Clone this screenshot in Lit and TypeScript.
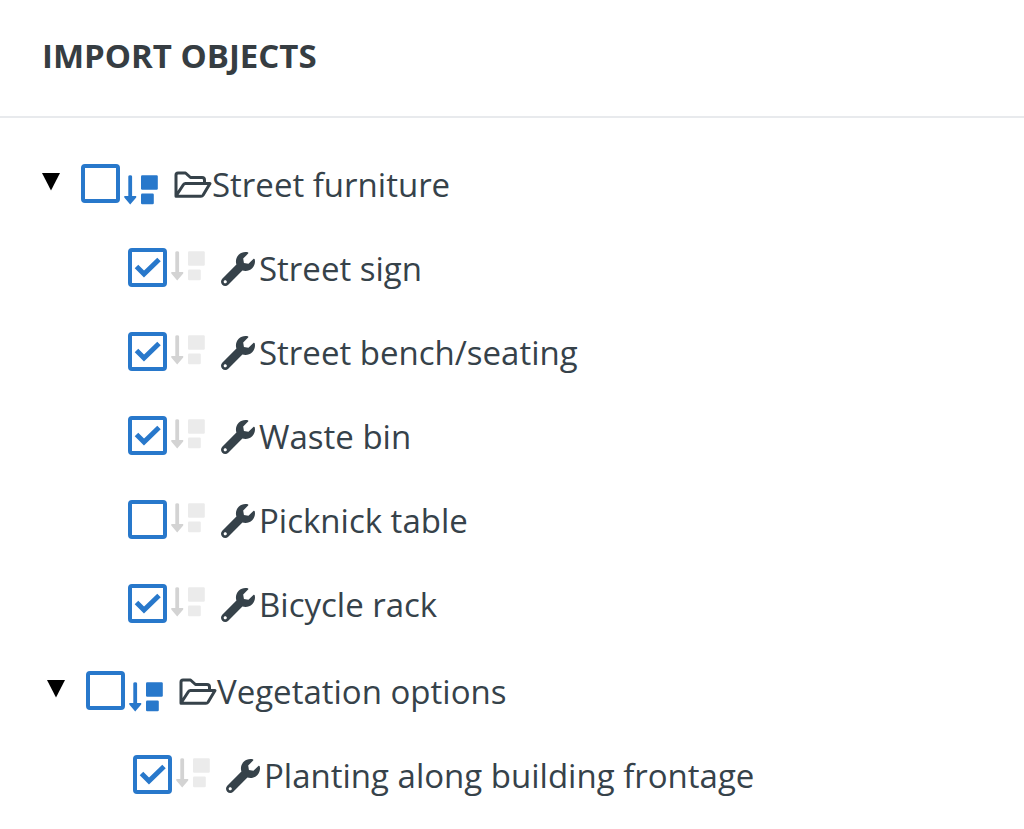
import { LitElement, html, css, svg } from "lit";
import { customElement, property, state } from "lit/decorators.js";
import { classMap } from "lit/directives/class-map.js";

interface Item {
  id: string;
  label: string;
  checked: boolean;
}

interface Group extends Item {
  open: boolean;
  items: Item[];
}

const folderIcon = html`<svg class="folder" viewBox="0 0 38 28" aria-hidden="true">
  <path d="M2 25V4Q2 2 4 2H11.500L16.500 6.500H28Q30.500 6.500 30.500 9V12.500M2 25L9.500 13.500Q10.200 12.500 11.500 12.500H36L29 24.200Q28.300 25.300 27 25.300H2Z" />
</svg>`;

const wrenchIcon = html`<svg class="wrench" viewBox="0 0 512 512" aria-hidden="true">
  <path d="M507.730 109.100c-2.240-9.030-13.540-12.090-20.120-5.510l-74.360 74.360-67.880-11.310-11.310-67.880 74.360-74.360c6.620-6.620 3.430-17.900-5.660-20.160-47.380-11.740-99.550.910-136.580 37.930-39.640 39.640-50.550 97.100-34.050 147.200L18.740 402.760c-24.990 24.990-24.990 65.510 0 90.500 24.990 24.990 65.510 24.990 90.500 0l213.210-213.210c50.120 16.710 107.470 5.680 147.370-34.220 37.070-37.070 49.700-89.320 37.910-136.730zM64 472c-13.250 0-24-10.750-24-24 0-13.260 10.750-24 24-24s24 10.740 24 24c0 13.250-10.750 24-24 24z" />
</svg>`;

@customElement("tree-row")
export class TreeRow extends LitElement {
  @property({ type: Boolean }) folder = false;
  @property({ type: Boolean }) checked = false;
  @property({ type: Boolean }) open = false;
  @property() label = "";

  static styles = css`
    :host {
      display: block;
    }
    .row {
      display: flex;
      align-items: center;
      min-height: 84px;
    }
    button {
      appearance: none;
      border: 0;
      padding: 0;
      background: none;
      cursor: pointer;
      flex: none;
    }
    .toggle {
      display: flex;
      width: 39px;
      padding-bottom: 6px;
    }
    .toggle svg {
      width: 18px;
      height: 18px;
      fill: #000;
    }
    .closed svg {
      transform: rotate(-90deg);
    }
    .check {
      display: grid;
      flex: none;
      margin-right: 4px;
      padding-bottom: 3px;
    }
    .check > * {
      grid-area: 1 / 1;
    }
    input {
      appearance: none;
      box-sizing: border-box;
      width: 39px;
      height: 39px;
      margin: 0;
      border: 4px solid #2878cb;
      border-radius: 4px;
      background: #fff;
    }
    .check svg {
      width: 39px;
      height: 39px;
      fill: none;
      stroke: #2878cb;
      stroke-width: 5;
      pointer-events: none;
    }
    .sort {
      display: flex;
      width: 34px;
      margin-right: 16px;
      padding-bottom: 6px;
      color: #ebebeb;
    }
    .sort svg {
      width: 34px;
      height: 30px;
      fill: currentColor;
    }
    .sort .arrow {
      fill: #d3d3d3;
    }
    .sort.active {
      padding-top: 10px;
      padding-bottom: 0;
      color: #2878cb;
    }
    .sort.active .arrow {
      fill: currentColor;
    }
    label {
      display: flex;
      align-items: center;
      font-size: 33px;
      line-height: 46px;
    }
    .folder {
      flex: none;
      width: 38px;
      height: 28px;
      fill: none;
      stroke: #36424a;
      stroke-width: 3;
      stroke-linejoin: round;
    }
    .wrench {
      flex: none;
      width: 34px;
      height: 34px;
      margin-right: 4px;
      fill: #36424a;
    }
  `;

  private toggle() {
    this.dispatchEvent(new CustomEvent("toggle-open"));
  }

  private change(e: Event) {
    this.checked = (e.target as HTMLInputElement).checked;
  }

  render() {
    return html`<div class="row">
      ${this.folder
        ? html`<button
            class=${classMap({ toggle: true, closed: !this.open })}
            aria-label="Toggle ${this.label}"
            aria-expanded=${this.open ? "true" : "false"}
            @click=${this.toggle}
          >
            <svg viewBox="0 0 18 18" aria-hidden="true"><path d="M0 0H18L9 17.500Z" /></svg>
          </button>`
        : ""}
      <span class="check">
        <input id="box" type="checkbox" .checked=${this.checked} @change=${this.change} />
        <svg viewBox="0 0 39 39" aria-hidden="true">
          ${this.checked ? svg`<path d="M8.500 18.500L16 26L31 11.500" />` : ""}
        </svg>
      </span>
      <button
        class=${classMap({ sort: true, active: this.folder })}
        aria-label="Sort ${this.label}"
        ?disabled=${!this.folder}
      >
        <svg viewBox="0 0 34 30" aria-hidden="true">
          <path class="arrow" d="M4.300 1.500Q4.300 .2 6.200 .2T8.100 1.500V21H12.200V22.500L6.200 29.500L.3 22.500V21H4.300Z" />
          <rect x="17" y="0.200" width="16.800" height="14.500" rx="1.200" />
          <rect x="17" y="18.500" width="12.800" height="10.800" rx="1.200" />
        </svg>
      </button>
      <label for="box">${this.folder ? folderIcon : wrenchIcon}<span>${this.label}</span></label>
    </div>`;
  }
}

@customElement("app-root")
export class AppRoot extends LitElement {
  @state() private groups: Group[] = [
    {
      id: "street",
      label: "Street furniture",
      checked: false,
      open: true,
      items: [
        { id: "sign", label: "Street sign", checked: true },
        { id: "bench", label: "Street bench/seating", checked: true },
        { id: "bin", label: "Waste bin", checked: true },
        { id: "table", label: "Picknick table", checked: false },
        { id: "rack", label: "Bicycle rack", checked: true },
      ],
    },
    {
      id: "vegetation",
      label: "Vegetation options",
      checked: false,
      open: true,
      items: [{ id: "planting", label: "Planting along building frontage", checked: true }],
    },
  ];

  static styles = css`
    :host {
      display: block;
      background: #fff;
      color: #36424a;
      font-family: "Open Sans", "Noto Sans", sans-serif;
    }
    header {
      padding: 33px 42px 37px;
      border-bottom: 2px solid #e8eaed;
    }
    h1 {
      margin: 0;
      font-size: 33px;
      font-weight: 700;
      line-height: 46px;
      text-transform: uppercase;
      color: #363d42;
    }
    ul {
      margin: 0;
      padding: 0;
      list-style: none;
    }
    .tree {
      padding: 25px 42px 0;
    }
    .group + .group {
      margin-top: 3px;
      margin-left: 5px;
    }
    .items {
      padding-left: 86px;
    }
  `;

  private toggle(id: string) {
    this.groups = this.groups.map((g) => (g.id === id ? { ...g, open: !g.open } : g));
  }

  render() {
    return html`
      <header><h1>Import objects</h1></header>
      <main>
        <ul class="tree">
          ${this.groups.map(
            (g) => html`<li class="group">
              <tree-row
                folder
                .open=${g.open}
                .checked=${g.checked}
                .label=${g.label}
                @toggle-open=${() => this.toggle(g.id)}
              ></tree-row>
              ${g.open
                ? html`<ul class="items">
                    ${g.items.map(
                      (i) => html`<li><tree-row .checked=${i.checked} .label=${i.label}></tree-row></li>`,
                    )}
                  </ul>`
                : ""}
            </li>`,
          )}
        </ul>
      </main>
    `;
  }
}
